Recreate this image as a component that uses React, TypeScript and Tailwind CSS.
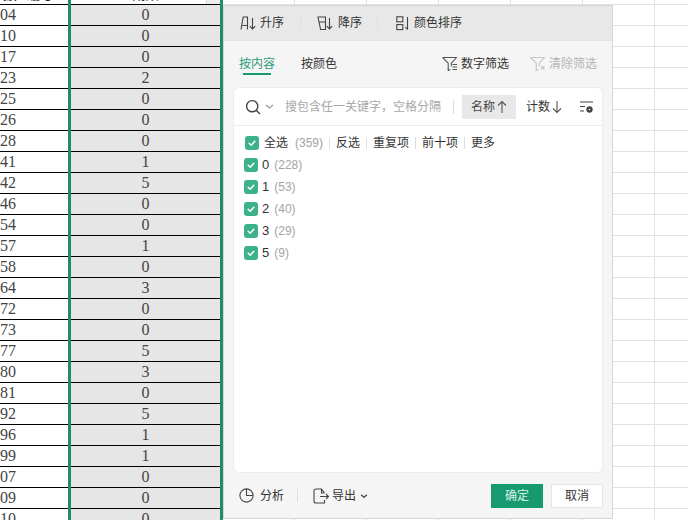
import React from "react";

const rows: [string, string][] = [
  ["04","0"],["10","0"],["17","0"],["23","2"],["25","0"],["26","0"],["28","0"],["41","1"],["42","5"],["46","0"],
  ["54","0"],["57","1"],["58","0"],["64","3"],["72","0"],["73","0"],["77","5"],["80","3"],["81","0"],["92","5"],
  ["96","1"],["99","1"],["07","0"],["09","0"],["10","0"],
];
const items: [string, string][] = [["0","(228)"],["1","(53)"],["2","(40)"],["3","(29)"],["5","(9)"]];
const gridCells = [0,1,2,3,4,5,6];

function GridCells() {
  return (
    <div className="flex h-full shrink-0">
      {gridCells.map((i) => (
        <div key={i} className="w-[72px] shrink-0 h-full border-r border-b border-[#e2e2e2]" />
      ))}
    </div>
  );
}

function Check({ className }: { className: string }) {
  return (
    <span className={`flex w-[14px] h-[14px] shrink-0 items-center justify-center rounded-[3px] bg-[#3db28a] ${className}`}>
      <svg width="10" height="10" viewBox="0 0 10 10" fill="none" stroke="#fff" strokeWidth="1.5" strokeLinecap="round" strokeLinejoin="round">
        <path d="M2.2 5.2 4.2 7.2 7.8 3.2" />
      </svg>
    </span>
  );
}

const Div = ({ className }: { className: string }) => <span className={`w-px shrink-0 bg-[#dedede] ${className}`} />;

const DownArrow = () => <path d="M12.5 3v11M9.8 11.2l2.7 2.8 2.7-2.8" />;

function Funnel({ color, children }: { color: string; children?: React.ReactNode }) {
  return (
    <svg width="16" height="16" viewBox="0 0 16 16" fill="none" stroke={color} strokeWidth="1.1" strokeLinejoin="round">
      <path d="M0.6 1.5h14L9.3 7.2v3M0.6 1.5l5.6 5.7v7.3l2.2-1" />
      {children}
    </svg>
  );
}

export default function App() {
  return (
    <div className="relative w-[688px] h-[520px] overflow-hidden bg-white font-['Liberation_Sans','Noto_Sans_CJK_SC',sans-serif]">
      <div className="flex flex-col font-['Liberation_Serif','Noto_Sans_CJK_SC',serif] text-[16px] text-[#444444]">
        <div className="flex h-[21px] -mt-[16px] shrink-0">
          <div className="w-[68px] shrink-0 border-b border-black text-[13px] leading-[20px] pl-[1px] overflow-hidden whitespace-nowrap font-['Noto_Sans_CJK_SC',sans-serif] font-bold text-[#222222]">客户编号</div>
          <div className="w-[155px] shrink-0 border-x-[3px] border-[#1d8e6c]">
            <div className="h-full relative border-b border-black text-center text-[13px] leading-[20px] font-['Noto_Sans_CJK_SC',sans-serif] text-[#222222]">
              期数
              <span className="absolute right-0 bottom-0 w-[14px] h-[16px] bg-[#eeeeee] border-l border-[#d8d8d8]" />
            </div>
          </div>
          <GridCells />
        </div>
        {rows.map(([a, b], i) => (
          <div key={i} className="flex h-[21px] shrink-0">
            <div className="w-[68px] shrink-0 border-b border-black overflow-hidden">
              <div className="w-[16px] text-right leading-[20px] whitespace-nowrap">{a}</div>
            </div>
            <div className="w-[155px] shrink-0 border-x-[3px] border-[#1d8e6c]">
              <div className="h-full bg-[#e6e6e6] border-b border-black text-center leading-[20px]">{b}</div>
            </div>
            <GridCells />
          </div>
        ))}
      </div>

      <div className="absolute left-[223px] top-[5px] w-[390px] h-[514px] flex flex-col bg-[#f5f5f5] border border-[#d6d6d6] text-[12px] text-[#333333]">
        <div className="flex h-[35px] shrink-0 items-center bg-[#e8e8e8] pl-[16px] border-b border-[#e2e2e2]">
          <span className="flex items-center gap-[4px]">
            <svg width="16" height="16" viewBox="0 0 16 16" fill="none" stroke="#444" strokeWidth="1.1">
              <path d="M1 14.5 3.2 2h4.3v12.5M2.4 10.5h5.1" />
              <DownArrow />
            </svg>
            升序
          </span>
          <Div className="h-[14px] ml-[16px]" />
          <span className="flex items-center gap-[5px] ml-[16px]">
            <svg width="16" height="16" viewBox="0 0 16 16" fill="none" stroke="#444" strokeWidth="1.1">
              <path d="M1 2h7.5v12.5H3.6L1 2ZM1.8 7h6.7" />
              <DownArrow />
            </svg>
            降序
          </span>
          <Div className="h-[14px] ml-[15px]" />
          <span className="flex items-center gap-[3px] ml-[18px]">
            <svg width="15" height="16" viewBox="0 0 15 16" fill="none" stroke="#444" strokeWidth="1.1">
              <rect x="0.8" y="1.8" width="6" height="5" />
              <rect x="0.8" y="9.6" width="6" height="5" />
              <path d="M11.5 2v12.5M9.5 12.2l2 2.3" />
            </svg>
            颜色排序
          </span>
        </div>

        <div className="flex h-[46px] shrink-0 pl-[15px] pr-[15px]">
          <div className="flex flex-col items-center pt-[14px] text-[#2a9a76]">
            <span className="leading-[18px]">按内容</span>
            <span className="w-[28px] h-[2px] bg-[#179a6f]" />
          </div>
          <span className="ml-[26px] pt-[14px] leading-[18px]">按颜色</span>
          <div className="ml-auto flex items-center gap-[21px]">
            <span className="flex items-center gap-[3px]">
              <Funnel color="#555">
                <path d="M10.5 8.5h4.5M10.5 11h4.5M10.5 13.5h4.5" />
              </Funnel>
              数字筛选
            </span>
            <span className="flex items-center gap-[3px] text-[#b4b4b4]">
              <Funnel color="#c4c4c4">
                <path d="M11 10l3.5 3.5M14.5 10 11 13.5" />
              </Funnel>
              清除筛选
            </span>
          </div>
        </div>

        <div className="flex flex-col ml-[9px] w-[370px] h-[386px] shrink-0 bg-white rounded-[6px] border border-[#ececec]">
          <div className="flex h-[38px] shrink-0 items-center border-b border-[#ececec] pl-[11px]">
            <svg width="16" height="16" viewBox="0 0 16 16" fill="none" stroke="#444" strokeWidth="1.4">
              <circle cx="7.2" cy="7.2" r="5.6" />
              <path d="m11.4 11.4 3.1 3.2" strokeLinecap="round" />
            </svg>
            <svg className="ml-[4px]" width="9" height="9" viewBox="0 0 9 9" fill="none" stroke="#999" strokeWidth="1.2">
              <path d="m1 3 3.5 3L8 3" />
            </svg>
            <span className="ml-[11px] text-[#a8a8a8] w-[156px] whitespace-nowrap">搜包含任一关键字，空格分隔</span>
            <Div className="h-[14px] ml-[12px]" />
            <span className="ml-[8px] flex items-center gap-[2px] w-[54px] h-[24px] pl-[9px] bg-[#e8e8e8] text-[#444444]">
              名称
              <svg width="10" height="14" viewBox="0 0 10 14" fill="none" stroke="#555" strokeWidth="1.1">
                <path d="M5 13V1.5M1 5.5l4-4 4 4" />
              </svg>
            </span>
            <span className="ml-[10px] flex items-center gap-[2px]">
              计数
              <svg width="10" height="14" viewBox="0 0 10 14" fill="none" stroke="#555" strokeWidth="1.1">
                <path d="M5 1v11.5M1 8.5l4 4 4-4" />
              </svg>
            </span>
            <svg className="ml-[17px]" width="15" height="14" viewBox="0 0 15 14" fill="none" stroke="#444" strokeWidth="1.1">
              <path d="M1 2h13M1 6.5h5M1 11h4" />
              <circle cx="10.5" cy="9.5" r="2.6" fill="#444" />
              <circle cx="10.5" cy="9.5" r="0.8" fill="#fff" stroke="none" />
            </svg>
          </div>

          <div className="flex flex-col pt-[10px]">
            <div className="flex h-[14px] items-center pl-[11px]">
              <Check className="" />
              <span className="ml-[5px] w-[24px]">全选</span>
              <span className="ml-[7px] text-[#a3a3a3] w-[28px]">(359)</span>
              <Div className="h-[12px] ml-[6px]" />
              <span className="ml-[6px]">反选</span>
              <Div className="h-[12px] ml-[6px]" />
              <span className="ml-[6px]">重复项</span>
              <Div className="h-[12px] ml-[6px]" />
              <span className="ml-[6px]">前十项</span>
              <Div className="h-[12px] ml-[6px]" />
              <span className="ml-[6px]">更多</span>
            </div>
            <div className="flex flex-col gap-[8px] pt-[8px] pl-[10px]">
              {items.map(([v, c]) => (
                <div key={v} className="flex h-[14px] items-center">
                  <Check className="" />
                  <span className="ml-[4px] text-[13px]">{v}</span>
                  <span className="ml-[5px] text-[#a3a3a3] text-[12px]">{c}</span>
                </div>
              ))}
            </div>
          </div>
        </div>

        <div className="flex flex-1 items-center pl-[15px]">
          <svg width="15" height="15" viewBox="0 0 15 15" fill="none" stroke="#444" strokeWidth="1.1">
            <circle cx="7.5" cy="7.5" r="6.6" />
            <path d="M7.5 1v6.5h6.5" />
          </svg>
          <span className="ml-[6px]">分析</span>
          <Div className="h-[13px] ml-[13px]" />
          <svg className="ml-[15px]" width="16" height="16" viewBox="0 0 16 16" fill="none" stroke="#444" strokeWidth="1.1">
            <path d="M11.5 5 8.5 1H3Q1 1 1 3v10q0 2 2 2h8.5v-3M8.5 1v4h3" />
            <path d="M7 8.5h8.5M13 6l2.5 2.5L13 11" />
          </svg>
          <span className="ml-[3px]">导出</span>
          <svg className="ml-[4px]" width="8" height="8" viewBox="0 0 8 8" fill="none" stroke="#444" strokeWidth="1.4">
            <path d="m1.2 2.8 2.8 2.6 2.8-2.6" />
          </svg>
          <div className="ml-auto mr-[9px] flex gap-[8px]">
            <span className="flex w-[52px] h-[24px] items-center justify-center bg-[#179a6f] text-[#d9f0e7]">确定</span>
            <span className="flex w-[52px] h-[24px] items-center justify-center bg-white border border-[#e4e4e4]">取消</span>
          </div>
        </div>
      </div>
    </div>
  );
}
